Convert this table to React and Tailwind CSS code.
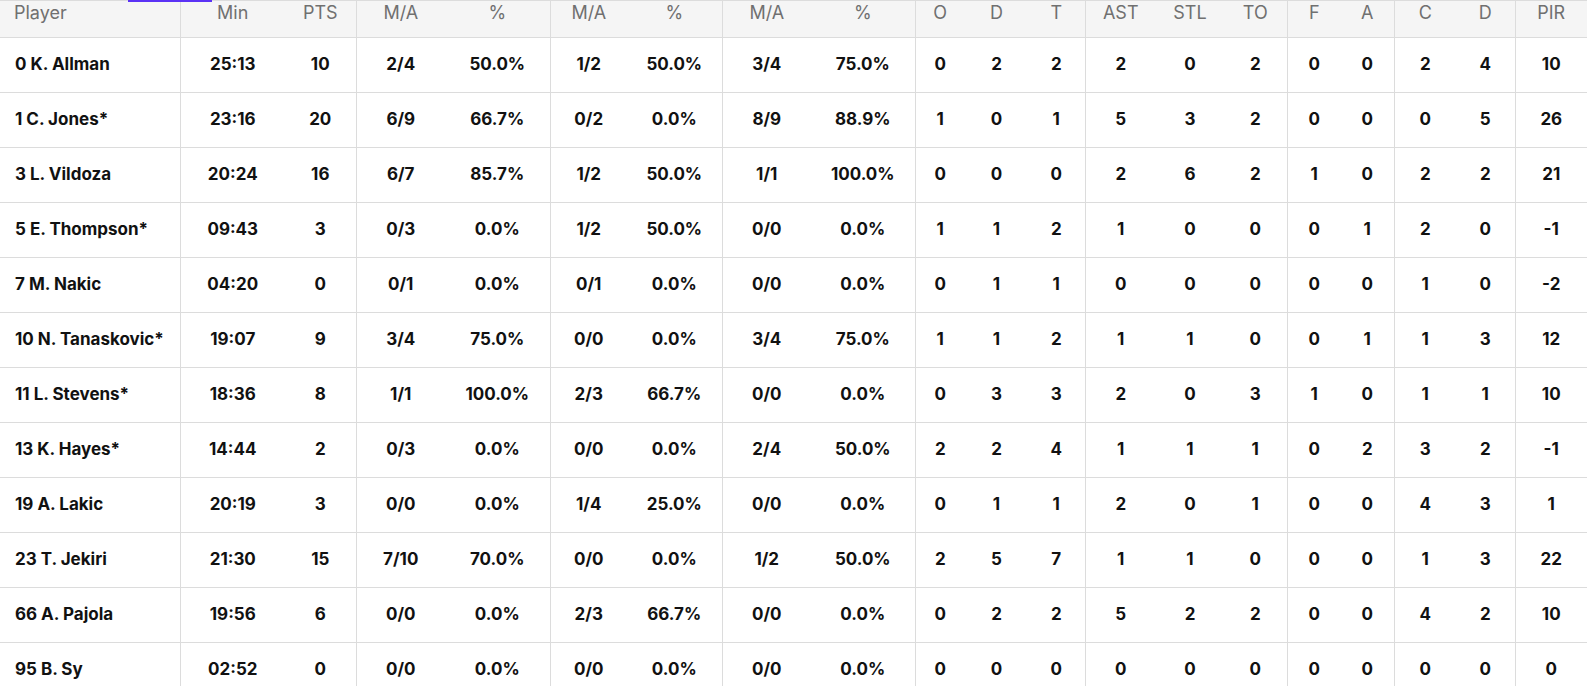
const widths = [180, 105, 71, 89, 105, 77, 95, 89, 104, 50, 63, 57, 71, 68, 63, 54, 53, 62, 59, 72];
const groupStart = new Set([1, 3, 5, 7, 9, 12, 15, 17, 19]);
const headers = ["Player", "Min", "PTS", "M/A", "%", "M/A", "%", "M/A", "%", "O", "D", "T", "AST", "STL", "TO", "F", "A", "C", "D", "PIR"];

const rows = [
  ["0 K. Allman", "25:13", "10", "2/4", "50.0%", "1/2", "50.0%", "3/4", "75.0%", "0", "2", "2", "2", "0", "2", "0", "0", "2", "4", "10"],
  ["1 C. Jones*", "23:16", "20", "6/9", "66.7%", "0/2", "0.0%", "8/9", "88.9%", "1", "0", "1", "5", "3", "2", "0", "0", "0", "5", "26"],
  ["3 L. Vildoza", "20:24", "16", "6/7", "85.7%", "1/2", "50.0%", "1/1", "100.0%", "0", "0", "0", "2", "6", "2", "1", "0", "2", "2", "21"],
  ["5 E. Thompson*", "09:43", "3", "0/3", "0.0%", "1/2", "50.0%", "0/0", "0.0%", "1", "1", "2", "1", "0", "0", "0", "1", "2", "0", "-1"],
  ["7 M. Nakic", "04:20", "0", "0/1", "0.0%", "0/1", "0.0%", "0/0", "0.0%", "0", "1", "1", "0", "0", "0", "0", "0", "1", "0", "-2"],
  ["10 N. Tanaskovic*", "19:07", "9", "3/4", "75.0%", "0/0", "0.0%", "3/4", "75.0%", "1", "1", "2", "1", "1", "0", "0", "1", "1", "3", "12"],
  ["11 L. Stevens*", "18:36", "8", "1/1", "100.0%", "2/3", "66.7%", "0/0", "0.0%", "0", "3", "3", "2", "0", "3", "1", "0", "1", "1", "10"],
  ["13 K. Hayes*", "14:44", "2", "0/3", "0.0%", "0/0", "0.0%", "2/4", "50.0%", "2", "2", "4", "1", "1", "1", "0", "2", "3", "2", "-1"],
  ["19 A. Lakic", "20:19", "3", "0/0", "0.0%", "1/4", "25.0%", "0/0", "0.0%", "0", "1", "1", "2", "0", "1", "0", "0", "4", "3", "1"],
  ["23 T. Jekiri", "21:30", "15", "7/10", "70.0%", "0/0", "0.0%", "1/2", "50.0%", "2", "5", "7", "1", "1", "0", "0", "0", "1", "3", "22"],
  ["66 A. Pajola", "19:56", "6", "0/0", "0.0%", "2/3", "66.7%", "0/0", "0.0%", "0", "2", "2", "5", "2", "2", "0", "0", "4", "2", "10"],
  ["95 B. Sy", "02:52", "0", "0/0", "0.0%", "0/0", "0.0%", "0/0", "0.0%", "0", "0", "0", "0", "0", "0", "0", "0", "0", "0", "0"],
];

export default function App() {
  return (
    <div
      className="relative w-[1587px] h-[686px] overflow-hidden bg-white"
      style={{ fontFamily: "Inter, 'Noto Sans', sans-serif" }}
    >
      <div className="absolute top-0 left-[128px] w-[84px] h-[2px] bg-[#5b32f5] z-10" />
      <table className="table-fixed border-collapse w-[1587px]">
        <colgroup>
          {widths.map((w, i) => (
            <col key={i} style={{ width: w }} />
          ))}
        </colgroup>
        <thead>
          <tr className="bg-[#f5f5f5] border-t border-b border-[#dcdcdc]">
            {headers.map((h, i) => (
              <th
                key={i}
                className={
                  (i === 0 ? "text-left pl-[14px] " : "text-center ") +
                  (groupStart.has(i) ? "border-l border-[#dcdcdc] " : "") +
                  "h-[37px] align-top p-0 font-normal text-[18px] leading-[24px] text-[#707070]"
                }
              >
                {h}
              </th>
            ))}
          </tr>
        </thead>
        <tbody>
          {rows.map((r, ri) => (
            <tr key={ri} className="border-b border-[#dcdcdc]">
              {r.map((c, i) => (
                <td
                  key={i}
                  className={
                    (i === 0 ? "text-left pl-[15px] " : "text-center ") +
                    (groupStart.has(i) ? "border-l border-[#dcdcdc] " : "") +
                    "h-[55px] p-0 align-middle font-bold text-[17px] text-[#111111] whitespace-nowrap"
                  }
                >
                  {c}
                </td>
              ))}
            </tr>
          ))}
        </tbody>
      </table>
    </div>
  );
}
